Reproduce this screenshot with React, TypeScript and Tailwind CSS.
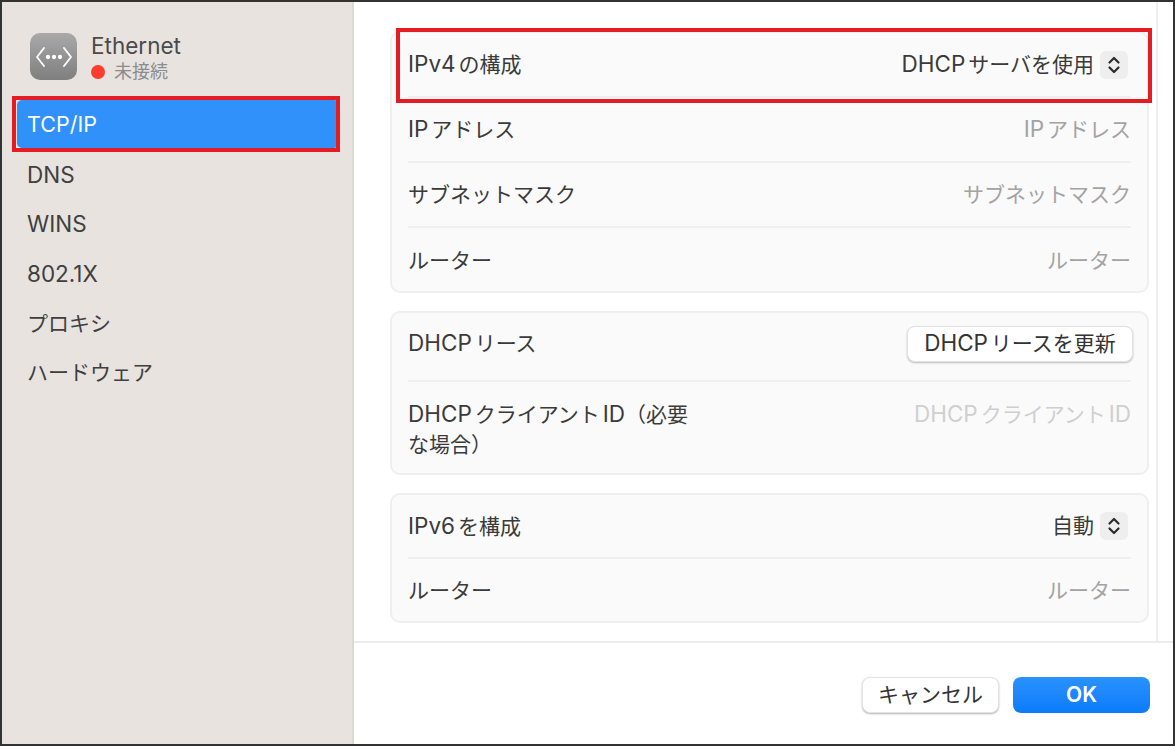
const font = "[font-family:'Inter','Liberation_Sans','Noto_Sans_CJK_JP',sans-serif]";

const L = ({ children }: { children: React.ReactNode }) => <span className="text-[22.5px]">{children}</span>;

function Stepper() {
  return (
    <span className="w-[28px] h-[28px] rounded-[6px] bg-[#eeeeee] flex items-center justify-center ml-[6px] mr-[3px]">
      <svg width="14" height="20" viewBox="0 0 14 20" fill="none" stroke="#2b2b2b" strokeWidth="2.2" strokeLinecap="round" strokeLinejoin="round">
        <path d="M2.5 7.5 7 3 11.5 7.5" />
        <path d="M2.5 12.5 7 17 11.5 12.5" />
      </svg>
    </span>
  );
}

function Row({ label, right, last, h, extra = "items-center" }: { label: React.ReactNode; right: React.ReactNode; last?: boolean; h: string; extra?: string }) {
  return (
    <div className={`${h} ml-[16px] mr-[16px] flex justify-between ${extra} ${last ? "" : "border-b-2 border-[#efefef]"}`}>
      <div className="text-[21px] leading-[30px] text-[#3a3a3a] w-[300px] [word-spacing:-3px]">{label}</div>
      <div className="flex items-center text-[21px] leading-[30px] text-[#3a3a3a] [word-spacing:-3px]">{right}</div>
    </div>
  );
}

const Muted = ({ children }: { children: React.ReactNode }) => <span className="text-[#a3a3a3]">{children}</span>;

function Card({ children }: { children: React.ReactNode }) {
  return <div className="rounded-[10px] border-2 border-[#efefef] bg-[#fafafa]">{children}</div>;
}

export default function App() {
  const items = ["DNS", "WINS", "802.1X", "プロキシ", "ハードウェア"];
  return (
    <div className={`relative w-[1175px] h-[746px] bg-white border-2 border-[#333333] flex overflow-hidden ${font}`}>
      <aside className="w-[352px] shrink-0 bg-[#e8e3df] border-r-2 border-[#dcd8d4] flex flex-col">
        <div className="flex items-start pl-[28px] pt-[31px] h-[98px]">
          <div className="w-[47px] h-[47px] rounded-[10px] bg-gradient-to-b from-[#a9a9a9] to-[#7f7f7f] flex items-center justify-center">
            <svg width="38" height="24" viewBox="0 0 38 24" fill="none" stroke="#ffffff" strokeWidth="1.9" strokeLinecap="round" strokeLinejoin="round">
              <path d="M9 3 2 12 9 21" />
              <path d="M29 3 36 12 29 21" />
              <circle cx="13" cy="12" r="1.2" fill="#fff" />
              <circle cx="19" cy="12" r="1.2" fill="#fff" />
              <circle cx="25" cy="12" r="1.2" fill="#fff" />
            </svg>
          </div>
          <div className="ml-[14px] flex flex-col">
            <div className="text-[22.5px] leading-[26px] text-[#4a4a4a]">Ethernet</div>
            <div className="flex items-center text-[18px] leading-[26px] text-[#8c8c8c]">
              <span className="w-[14px] h-[14px] rounded-full bg-[#ff3b30] mr-[9px]" />
              未接続
            </div>
          </div>
        </div>
        <div className="ml-[15px] mr-[13px] h-[48px] rounded-[5px] bg-[#3191fb] flex items-center pl-[10px] text-[21.5px] text-white">TCP/IP</div>
        <div className="flex flex-col mt-[2px]">
          {items.map((t, i) => (
            <div key={t} className={`h-[49.5px] pl-[25px] flex items-center text-[#3f3f3f] ${i < 3 ? "text-[22.5px]" : "text-[21px]"}`}>{t}</div>
          ))}
        </div>
      </aside>

      <main className="flex-1 flex flex-col">
        <div className="h-[641px] flex border-b-2 border-[#ececec]">
          <div className="flex-1 pt-[29px] pl-[36px] pr-[7px] flex flex-col gap-[18px]">
            <Card>
              <Row h="h-[65px]" label={<><L>IPv4</L> の構成</>} right={<><span><L>DHCP</L> サーバを使用</span><Stepper /></>} />
              <Row h="h-[65px]" label={<><L>IP</L> アドレス</>} right={<Muted><L>IP</L> アドレス</Muted>} />
              <Row h="h-[65px]" label="サブネットマスク" right={<Muted>サブネットマスク</Muted>} />
              <Row h="h-[63px] pt-[2px]" last label="ルーター" right={<Muted>ルーター</Muted>} />
            </Card>
            <Card>
              <Row
                h="h-[69px] pb-[6px]"
                label={<><L>DHCP</L> リース</>}
                right={
                  <span className="h-[36px] w-[226px] ml-[2px] -mr-[2px] rounded-[8px] bg-white border border-[#e2e2e2] shadow-[0_1px_2px_rgba(0,0,0,0.25)] flex items-center justify-center text-[#333333]"><span><L>DHCP</L> リースを更新</span></span>
                }
              />
              <Row
                h="h-[91px] pt-[17px]"
                extra="items-start"
                last
                label={<span className="block w-[290px]"><L>DHCP</L> クライアント <L>ID</L>（必要な場合）</span>}
                right={<span className="text-[#cfcfcf]"><L>DHCP</L> クライアント <L>ID</L></span>}
              />
            </Card>
            <Card>
              <Row h="h-[64px]" label={<><L>IPv6</L> を構成</>} right={<><span>自動</span><Stepper /></>} />
              <Row h="h-[62px] pt-[2px]" last label="ルーター" right={<Muted>ルーター</Muted>} />
            </Card>
          </div>
          <div className="w-[17px] shrink-0 border-l-2 border-[#f0f0f0]" />
        </div>
        <div className="flex-1 flex justify-end items-start pt-[34px] pr-[23px] gap-[14px]">
          <button className="h-[36px] w-[137px] rounded-[8px] bg-white border border-[#e4e4e4] shadow-[0_1px_2px_rgba(0,0,0,0.3)] text-[21px] text-[#333333] flex items-center justify-center">キャンセル</button>
          <button className="h-[36px] w-[137px] rounded-[8px] bg-gradient-to-b from-[#2a92fd] to-[#0a7bfb] text-[21px] font-semibold text-white flex items-center justify-center">OK</button>
        </div>
      </main>

      <div className="absolute left-[10px] top-[94px] w-[328px] h-[56px] border-[4px] border-[#e51c23]" />
      <div className="absolute left-[394px] top-[26px] w-[756px] h-[75px] border-[4px] border-[#e51c23]" />
    </div>
  );
}
